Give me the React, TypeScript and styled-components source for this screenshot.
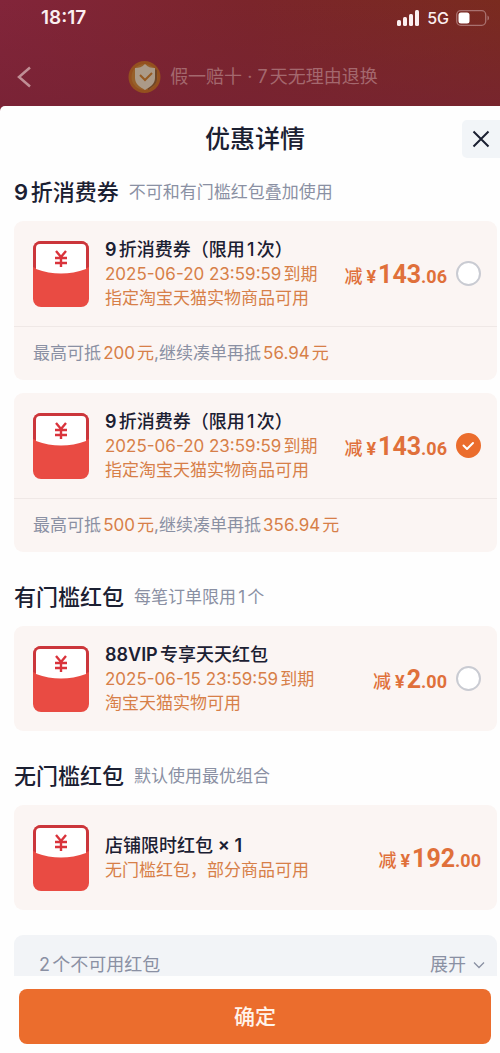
import React, { useState } from "react";
import styled, { createGlobalStyle, css } from "styled-components";

const color = {
  ink: "#1b2032",
  muted: "#8a90a3",
  orange: "#d77f48",
  strong: "#e0703a",
  brand: "#eb6d2d",
  card: "#fbf5f3",
};

const GlobalStyle = createGlobalStyle`
  *, *::before, *::after { box-sizing: border-box; }
  body { margin: 0; background: #fff; }
  body, button, input {
    font-family: Inter, "Noto Sans CJK SC", sans-serif;
    text-autospace: normal;
  }
  button { border: 0; padding: 0; background: none; cursor: pointer; }
  h1, h2, h3, p { margin: 0; }
`;

const Screen = styled.div`
  height: 100vh;
  display: flex;
  flex-direction: column;
  background:
    linear-gradient(0deg, rgba(118, 34, 52, 0.7), transparent) 0 0 / 100% 110px no-repeat,
    linear-gradient(90deg, #82253a, #7b252b 50%, #7a2b1f);
`;

const StatusBar = styled.header`
  flex: none;
  display: flex;
  align-items: center;
  justify-content: space-between;
  height: 48px;
  padding: 0 10px 12px 41px;
  color: #fbeff0;
`;

const Clock = styled.time`
  font-size: 19px;
  line-height: 24px;
  font-weight: 600;
`;

const Signals = styled.div`
  display: flex;
  align-items: center;
  gap: 7px;
  font-size: 16px;
  line-height: 24px;
  font-weight: 500;
`;

const ShopBar = styled.nav`
  flex: none;
  display: grid;
  grid-template-columns: 40px 1fr 40px;
  align-items: center;
  height: 58px;
  padding: 0 8px;
`;

const BackButton = styled.button`
  display: flex;
  padding-left: 8px;
`;

const Pledge = styled.p`
  display: flex;
  align-items: center;
  justify-content: center;
  gap: 9px;
  padding-left: 6px;
  font-size: 18px;
  line-height: 24px;
  white-space: nowrap;
  color: #a4686e;
`;

const Sheet = styled.main`
  flex: 1;
  min-height: 0;
  display: flex;
  flex-direction: column;
  border-radius: 5px 0 0 0;
  background: #fefefe;
`;

const SheetHeader = styled.div`
  flex: none;
  display: grid;
  grid-template-columns: 1fr auto 1fr;
  align-items: center;
  padding: 14px 0 12px 10px;
`;

const SheetTitle = styled.h1`
  grid-column: 2;
  font-size: 25px;
  line-height: 36px;
  font-weight: 500;
  color: ${color.ink};
`;

const CloseButton = styled.button`
  justify-self: end;
  display: grid;
  place-items: center;
  width: 38px;
  height: 38px;
  border-radius: 5px 0 0 5px;
  background: #f2f5f8;
`;

const ScrollArea = styled.div`
  flex: 1;
  min-height: 0;
  overflow-y: auto;
  scrollbar-width: none;
  padding: 6px 3px 0 14px;
`;

const Section = styled.section`
  display: flex;
  flex-direction: column;
  gap: 13px;
  & + & { margin-top: 29px; }
`;

const SectionHead = styled.div`
  display: flex;
  align-items: center;
  gap: 10px;
  line-height: 32px;
  white-space: nowrap;
`;

const SectionTitle = styled.h2`
  font-size: 22px;
  font-weight: 500;
  color: ${color.ink};
`;

const SectionNote = styled.p`
  font-size: 17px;
  color: ${color.muted};
`;

const Card = styled.article`
  border-radius: 9px;
  background: ${color.card};
`;

const CardMain = styled.label`
  display: flex;
  align-items: center;
  height: 105px;
  padding: 0 16px 0 19px;
`;

const CardText = styled.div`
  flex: 1;
  min-width: 0;
  margin-left: 16px;
  line-height: 24px;
  white-space: nowrap;
`;

const CardTitle = styled.h3`
  font-size: 18px;
  font-weight: 500;
  color: ${color.ink};
`;

const Latin = styled.span`
  font-weight: 600;
`;

const CardLine = styled.p`
  font-size: 17px;
  color: ${color.orange};
`;

const CardFoot = styled.p`
  border-top: 1px solid #efe8e6;
  padding: 14px 19px 15px;
  font-size: 17px;
  line-height: 24px;
  color: ${color.muted};
`;

const Highlight = styled.span`
  color: ${color.orange};
`;

const PriceBox = styled.p`
  display: flex;
  align-items: baseline;
  padding-top: 4px;
  line-height: 32px;
  font-size: 18px;
  font-weight: 500;
  color: ${color.strong};
`;

const digits = css`
  font-family: Roboto, sans-serif;
  font-weight: 700;
`;

const Yen = styled.span`
  ${digits}
  margin: 0 2px 0 4px;
  font-size: 18px;
`;

const Whole = styled.span`
  ${digits}
  font-size: 25px;
`;

const Cents = styled.span`
  ${digits}
  font-size: 18px;
`;

const RadioBox = styled.span`
  display: grid;
  place-items: center;
  margin-left: 9px;
  & > * { grid-area: 1 / 1; }
  svg { pointer-events: none; }
`;

const Radio = styled.input`
  appearance: none;
  width: 25px;
  height: 25px;
  margin: 0;
  border: 2px solid #c9cbd2;
  border-radius: 50%;
  background: #fff;
  &:checked { border-color: ${color.brand}; background: ${color.brand}; }
`;

const Unusable = styled.button`
  display: flex;
  align-items: center;
  justify-content: space-between;
  width: 100%;
  height: 60px;
  margin-top: 25px;
  padding: 0 12px 0 25px;
  border-radius: 9px;
  background: #f2f4f7;
  font-size: 18px;
  line-height: 24px;
  color: ${color.muted};
`;

const Expand = styled.span`
  display: flex;
  align-items: center;
  gap: 7px;
`;

const Footer = styled.footer`
  flex: none;
  padding: 13px 9px 9px 19px;
`;

const Confirm = styled.button`
  width: 100%;
  height: 55px;
  border-radius: 8px;
  background: ${color.brand};
  font-size: 21px;
  line-height: 32px;
  font-weight: 500;
  color: #fff3ea;
`;

const RedPacket = () => (
  <svg width="56" height="66" viewBox="0 0 56 66" aria-hidden="true">
    <rect width="56" height="66" rx="8" fill="#e94b43" />
    <path d="M0 27V8a8 8 0 0 1 8-8h40a8 8 0 0 1 8 8v19z" fill="#cb363b" />
    <path d="M0 26Q28 39 56 26V40H0z" fill="#e94b43" />
    <path d="M3 28V7a4 4 0 0 1 4-4h42a4 4 0 0 1 4 4v21Q28 37 3 28z" fill="#fff" />
    <path
      d="M23 10l5 6 5-6M22 17h12M22 22h12M28 16v10"
      fill="none"
      stroke="#d9333b"
      strokeWidth="2.4"
    />
  </svg>
);

const Check = () => (
  <svg width="13" height="10" viewBox="0 0 13 10" fill="none" aria-hidden="true">
    <path d="M1.5 4.5L5 8l6-6" stroke="#fff" strokeWidth="2" strokeLinecap="round" strokeLinejoin="round" />
  </svg>
);

const Shield = () => (
  <svg width="33" height="34" viewBox="0 0 33 34" fill="none" aria-hidden="true">
    <circle cx="16.5" cy="17" r="16" fill="#94501f" />
    <circle cx="16.5" cy="17" r="13" fill="#97602a" />
    <path d="M18 6l11 4v9c0 5-5 8-9 11z" fill="#6f4526" />
    <path d="M17 4c3 3 6 4 10 4v10c0 6-5 9-10 12-5-3-10-6-10-12V8c4 0 7-1 10-4z" fill="#ab9a88" />
    <path d="M12 15l5 5 7-7" stroke="#955a22" strokeWidth="2" />
  </svg>
);

const Bars = () => (
  <svg width="23" height="16" viewBox="0 0 23 16" fill="currentColor" aria-hidden="true">
    <rect x="0" y="10" width="4" height="6" rx="1.5" />
    <rect x="6" y="7" width="4" height="9" rx="1.5" />
    <rect x="12" y="4" width="4" height="12" rx="1.5" />
    <rect x="18" y="0" width="4" height="16" rx="1.5" />
  </svg>
);

const Battery = () => (
  <svg width="34" height="16" viewBox="0 0 34 16" fill="none" aria-hidden="true">
    <rect x="0.7" y="0.7" width="29" height="14.6" rx="4" stroke="#a9716f" strokeWidth="1.3" />
    <rect x="2.5" y="2.5" width="11" height="11" rx="2.5" fill="#fff" />
    <path d="M31.5 5.5c2 .8 2 4.2 0 5z" fill="#a9716f" />
  </svg>
);

function Price({ whole, cents }: { whole: string; cents: string }) {
  return (
    <PriceBox>
      减<Yen>¥</Yen>
      <Whole>{whole}</Whole>
      <Cents>.{cents}</Cents>
    </PriceBox>
  );
}

type CouponProps = {
  title: React.ReactNode;
  lines: string[];
  whole: string;
  cents: string;
  selectable?: { group: string; checked: boolean; onSelect: () => void };
  foot?: { limit: string; more: string };
};

function Coupon({ title, lines, whole, cents, selectable, foot }: CouponProps) {
  return (
    <Card>
      <CardMain as={selectable ? "label" : "div"}>
        <RedPacket />
        <CardText>
          <CardTitle>{title}</CardTitle>
          {lines.map((line) => (
            <CardLine key={line}>{line}</CardLine>
          ))}
        </CardText>
        <Price whole={whole} cents={cents} />
        {selectable && (
          <RadioBox>
            <Radio
              type="radio"
              name={selectable.group}
              checked={selectable.checked}
              onChange={selectable.onSelect}
            />
            {selectable.checked && <Check />}
          </RadioBox>
        )}
      </CardMain>
      {foot && (
        <CardFoot>
          最高可抵<Highlight>{foot.limit}元</Highlight>,继续凑单再抵
          <Highlight>{foot.more}元</Highlight>
        </CardFoot>
      )}
    </Card>
  );
}

const vouchers = [
  { limit: "200", more: "56.94" },
  { limit: "500", more: "356.94" },
];

export default function App() {
  const [voucher, setVoucher] = useState(1);
  const [packet, setPacket] = useState(false);

  return (
    <Screen>
      <GlobalStyle />
      <StatusBar>
        <Clock>18:17</Clock>
        <Signals>
          <Bars />
          5G
          <Battery />
        </Signals>
      </StatusBar>
      <ShopBar>
        <BackButton aria-label="返回">
          <svg width="16" height="24" viewBox="0 0 16 24" fill="none" aria-hidden="true">
            <path d="M14 2.5L3 12l11 9.5" stroke="#c08e95" strokeWidth="2.5" />
          </svg>
        </BackButton>
        <Pledge>
          <Shield />
          假一赔十 · 7天无理由退换
        </Pledge>
      </ShopBar>
      <Sheet>
        <SheetHeader>
          <SheetTitle>优惠详情</SheetTitle>
          <CloseButton aria-label="关闭">
            <svg width="18" height="18" viewBox="0 0 18 18" aria-hidden="true">
              <path d="M1.5 1.5l15 15M16.5 1.5l-15 15" stroke={color.ink} strokeWidth="2" />
            </svg>
          </CloseButton>
        </SheetHeader>
        <ScrollArea>
          <Section>
            <SectionHead>
              <SectionTitle><Latin>9</Latin>折消费券</SectionTitle>
              <SectionNote>不可和有门槛红包叠加使用</SectionNote>
            </SectionHead>
            {vouchers.map((foot, i) => (
              <Coupon
                key={foot.limit}
                title={<><Latin>9</Latin>折消费券（限用1次）</>}
                lines={["2025-06-20 23:59:59到期", "指定淘宝天猫实物商品可用"]}
                whole="143"
                cents="06"
                foot={foot}
                selectable={{ group: "voucher", checked: voucher === i, onSelect: () => setVoucher(i) }}
              />
            ))}
          </Section>
          <Section>
            <SectionHead>
              <SectionTitle>有门槛红包</SectionTitle>
              <SectionNote>每笔订单限用1个</SectionNote>
            </SectionHead>
            <Coupon
              title={<><Latin>88VIP</Latin>专享天天红包</>}
              lines={["2025-06-15 23:59:59到期", "淘宝天猫实物可用"]}
              whole="2"
              cents="00"
              selectable={{ group: "packet", checked: packet, onSelect: () => setPacket(true) }}
            />
          </Section>
          <Section>
            <SectionHead>
              <SectionTitle>无门槛红包</SectionTitle>
              <SectionNote>默认使用最优组合</SectionNote>
            </SectionHead>
            <Coupon
              title={<>店铺限时红包 <Latin>× 1</Latin></>}
              lines={["无门槛红包，部分商品可用"]}
              whole="192"
              cents="00"
            />
          </Section>
          <Unusable>
            2个不可用红包
            <Expand>
              展开
              <svg width="12" height="8" viewBox="0 0 12 8" fill="none" aria-hidden="true">
                <path d="M1 1.5l5 5 5-5" stroke="currentColor" strokeWidth="1.3" />
              </svg>
            </Expand>
          </Unusable>
        </ScrollArea>
        <Footer>
          <Confirm>确定</Confirm>
        </Footer>
      </Sheet>
    </Screen>
  );
}
